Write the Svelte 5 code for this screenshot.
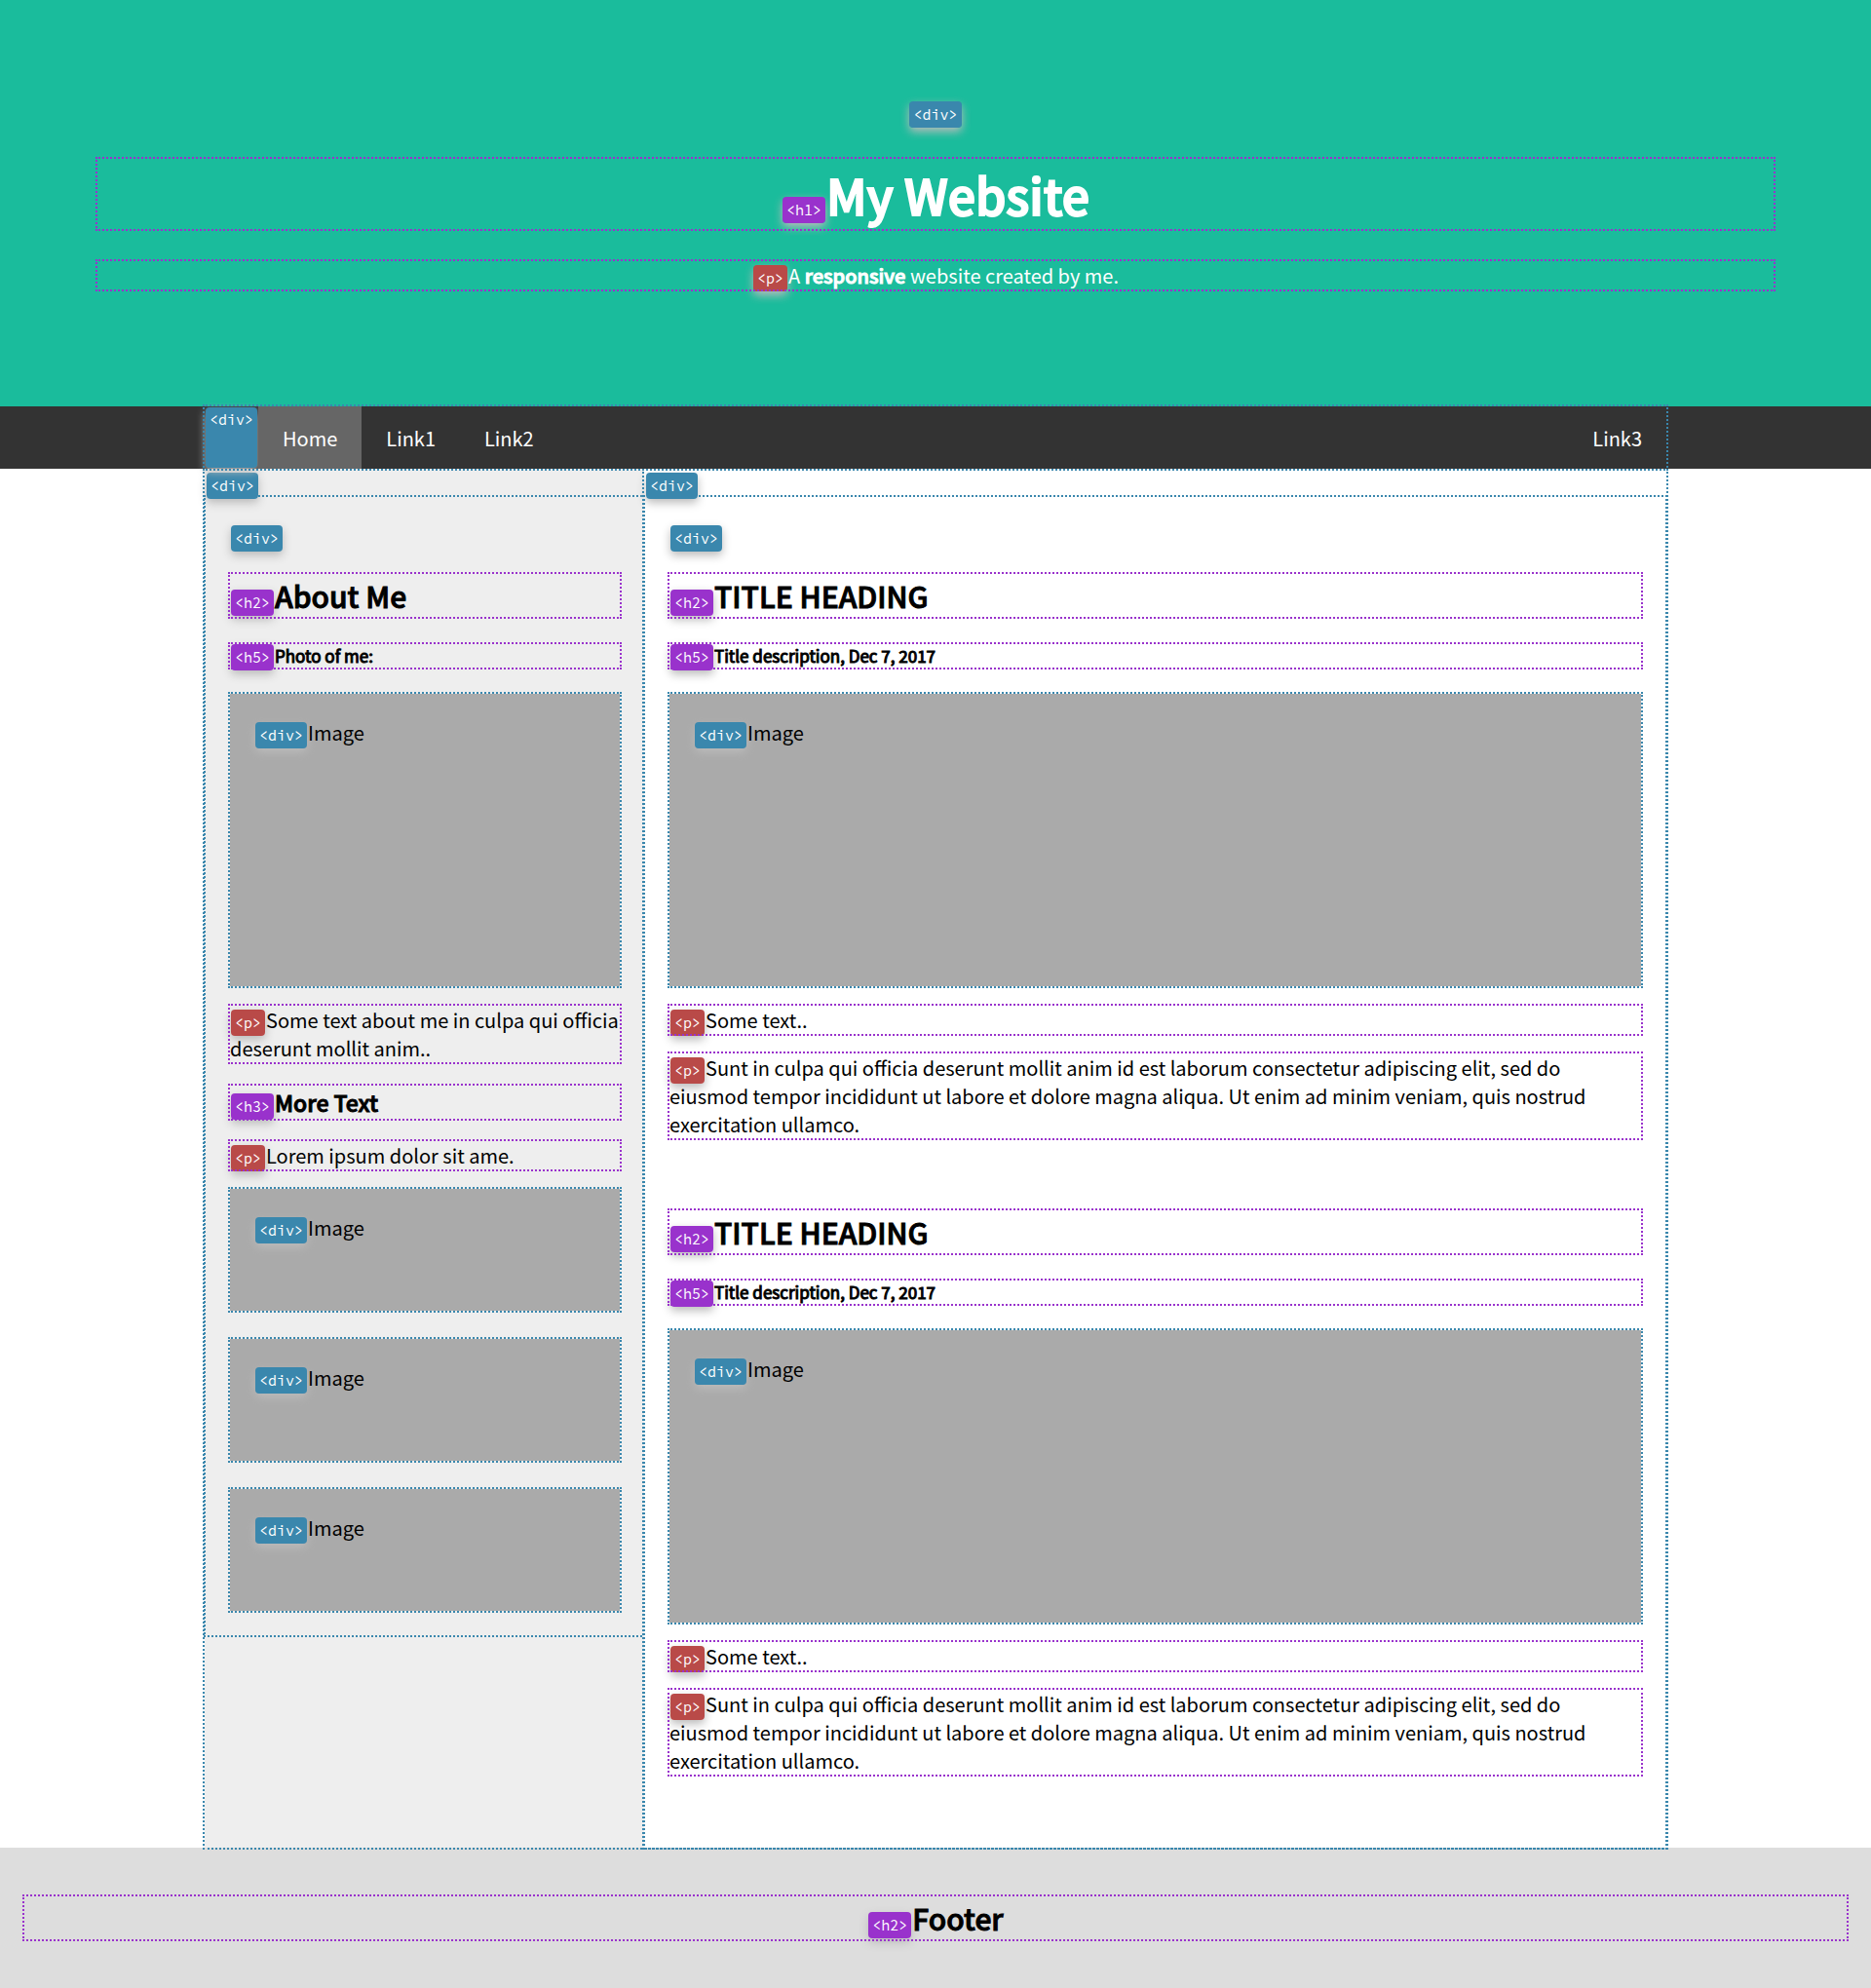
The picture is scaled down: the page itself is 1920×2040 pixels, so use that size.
<script>
  const posts = [
    { title: 'TITLE HEADING', description: 'Title description, Dec 7, 2017' },
    { title: 'TITLE HEADING', description: 'Title description, Dec 7, 2017' }
  ];
  const thumbs = ['Image', 'Image', 'Image'];
</script>

{#snippet tag(name)}<code class="tag {name}">&lt;{name}&gt;</code>{/snippet}

<header class="header">
  <div>{@render tag('div')}</div>
  <h1>{@render tag('h1')}My Website</h1>
  <p>{@render tag('p')}A <b>responsive</b> website created by me.</p>
</header>

<div class="bar">
  <nav class="nav">
    {@render tag('div')}
    <a class="active" href="#home">Home</a>
    <a href="#link1">Link1</a>
    <a href="#link2">Link2</a>
    <a class="right" href="#link3">Link3</a>
  </nav>
</div>

<div class="row">
  <aside class="side">
    <div>{@render tag('div')}</div>
    <div class="inner">
      <div>{@render tag('div')}</div>
      <h2>{@render tag('h2')}About Me</h2>
      <h5>{@render tag('h5')}Photo of me:</h5>
      <div class="image tall">{@render tag('div')}Image</div>
      <p>{@render tag('p')}Some text about me in culpa qui officia deserunt mollit anim..</p>
      <h3>{@render tag('h3')}More Text</h3>
      <p>{@render tag('p')}Lorem ipsum dolor sit ame.</p>
      <div class="thumbs">
        {#each thumbs as label}
          <div class="image">{@render tag('div')}{label}</div>
        {/each}
      </div>
    </div>
  </aside>
  <main class="main">
    <div>{@render tag('div')}</div>
    <div class="inner">
      <div>{@render tag('div')}</div>
      {#each posts as post}
        <article>
          <h2>{@render tag('h2')}{post.title}</h2>
          <h5>{@render tag('h5')}{post.description}</h5>
          <div class="image tall">{@render tag('div')}Image</div>
          <p>{@render tag('p')}Some text..</p>
          <p>{@render tag('p')}Sunt in culpa qui officia deserunt mollit anim id est laborum consectetur adipiscing elit, sed do eiusmod tempor incididunt ut labore et dolore magna aliqua. Ut enim ad minim veniam, quis nostrud exercitation ullamco.</p>
        </article>
      {/each}
    </div>
  </main>
</div>

<footer class="footer">
  <h2>{@render tag('h2')}Footer</h2>
</footer>

<style>
  :global(body) {
    margin: 0;
    background: #fff;
    color: #000;
    font-family: 'Noto Sans CJK SC', 'Noto Sans', sans-serif;
    font-size: 20px;
    font-weight: 400;
    line-height: 29px;
  }
  * { box-sizing: border-box; }

  .tag {
    margin: 0 1px;
    padding: 4px;
    border-radius: 4px;
    background: #9932cc;
    box-shadow: 0 4px 10px #bbb;
    color: #fff;
    font-family: 'Source Code Pro', 'Noto Sans Mono CJK SC', 'DejaVu Sans Mono', monospace;
    font-size: 15px;
    font-weight: 400;
    line-height: 1px;
    -webkit-text-stroke: 0;
  }
  .tag.div { background: #3a87ad; }
  .tag.p { background: #b94a48; }

  h1, h2, h3, h5, p { outline: 2px dotted #9932cc; }
  h1, h2, h3, h5, b {
    font-weight: 500;
    -webkit-text-stroke: 1px currentColor;
  }
  h1 {
    margin: 34px 0;
    font-size: 50px;
    line-height: 72px;
    -webkit-text-stroke-width: 2px;
  }
  h2 { margin: 25px 0 28px; font-size: 30px; line-height: 44px; }
  h3 { margin: 24px 0 23px; font-size: 23px; line-height: 34px; }
  h5 { margin: 28px 0 27px; font-size: 17px; font-weight: 400; line-height: 24px; }
  p { margin: 20px 0; }

  .header {
    display: flow-root;
    padding: 100px;
    background: #1abc9c;
    color: #fff;
    text-align: center;
  }
  .header h1 { margin-bottom: 33px; }

  .bar {
    position: relative;
    background: #333;
  }
  .nav {
    display: flex;
    width: 1500px;
    max-width: 100%;
    margin: 0 auto;
    outline: 2px dotted #3a87ad;
  }
  .nav .tag { margin: 1px; line-height: 17px; }
  .nav a {
    padding: 18px 25px 17px;
    color: #fff;
    text-decoration: none;
  }
  .nav .active { background: #666; }
  .nav .right { margin-left: auto; }

  .row {
    display: flex;
    width: 1500px;
    max-width: 100%;
    margin: 0 auto;
  }
  .side, .main {
    box-sizing: content-box;
    min-width: 0;
    outline: 2px dotted #3a87ad;
  }
  .side {
    flex: 0 0 30%;
    padding-left: 1px;
    background: #eee;
  }
  .main {
    flex: 1;
    padding: 0 1px;
    background: #fff;
  }
  .inner {
    padding: 25px;
    outline: 2px dotted #3a87ad;
  }
  .main .inner { padding-bottom: 26px; }
  .image {
    height: 125px;
    padding: 25px;
    background: #aaa;
    outline: 2px dotted #3a87ad;
  }
  .image.tall { height: 300px; }
  .thumbs { display: grid; gap: 29px; }
  article { padding-bottom: 29px; }

  .footer {
    display: flow-root;
    padding: 25px;
    background: #ddd;
    text-align: center;
  }
  .footer h2 { margin-bottom: 25px; }
</style>
